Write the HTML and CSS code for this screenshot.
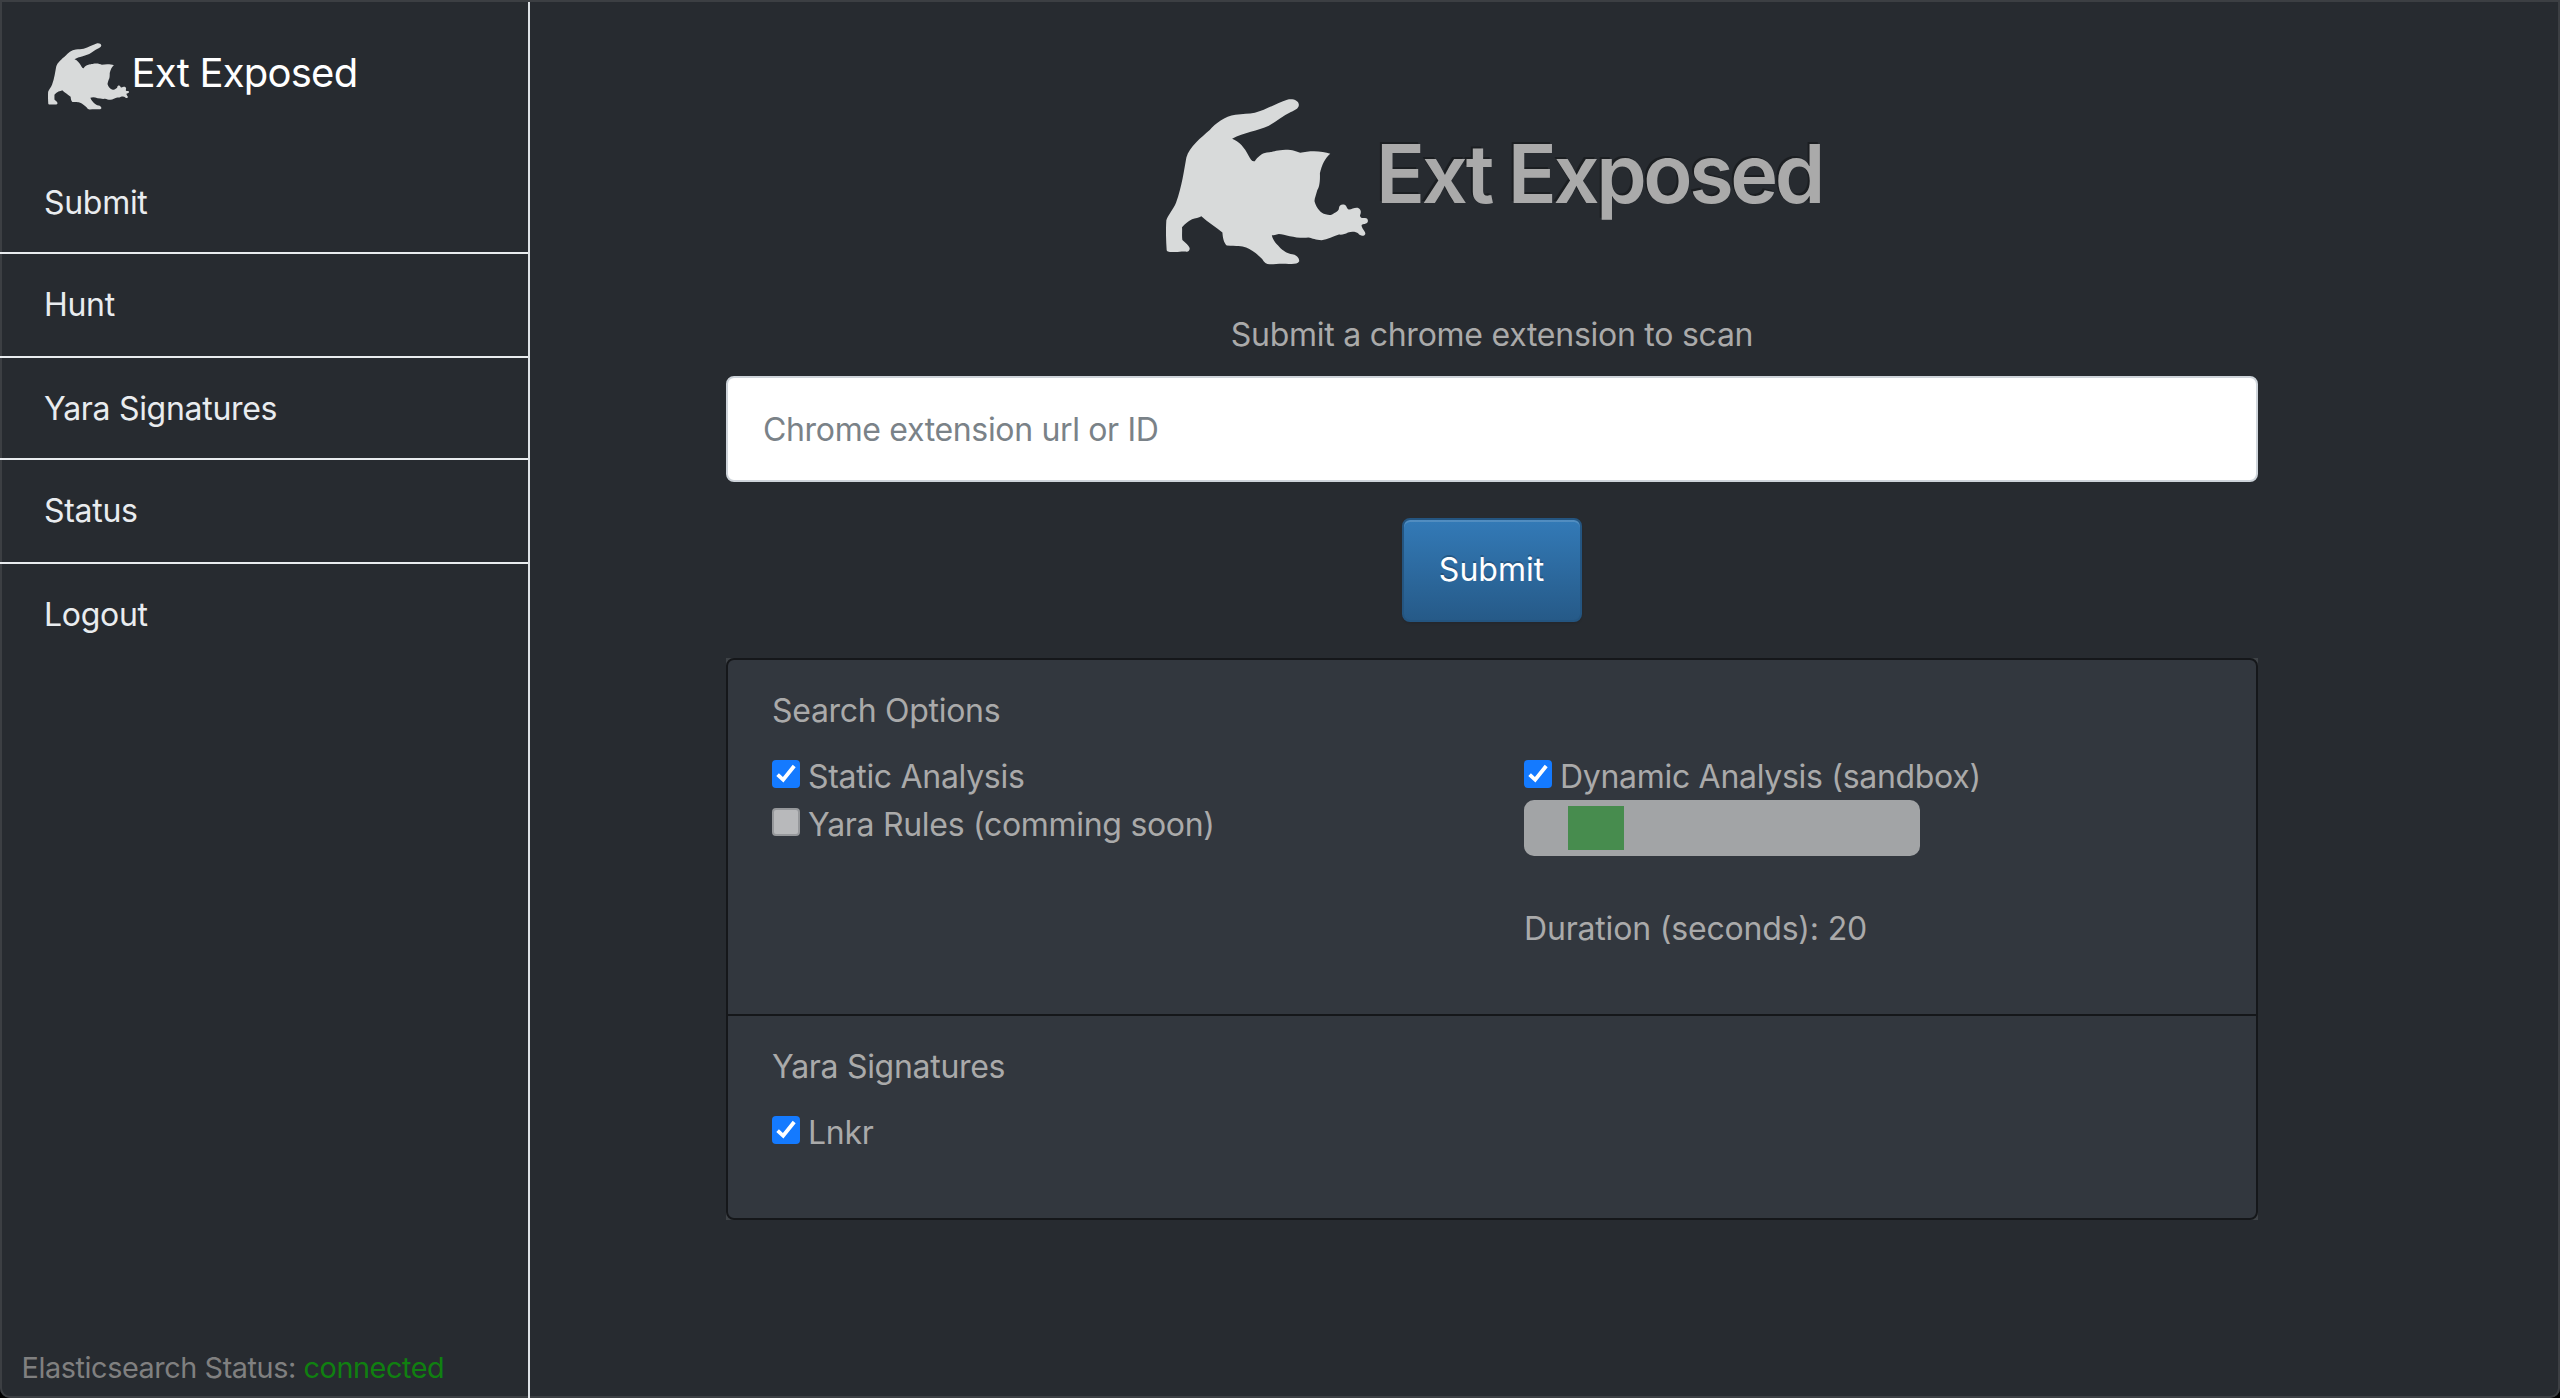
FILE: index.html
```html
<!DOCTYPE html>
<html lang="en">
<head>
  <meta charset="utf-8">
  <title>Ext Exposed</title>
  <link rel="stylesheet" href="styles.css">
</head>
<body>
  <svg class="defs" aria-hidden="true">
    <symbol id="cat" viewBox="82 57 605 497">
      <path d="M84 509C82 480 81 450 83 420C88 405 104 388 112 368C130 318 136 270 143 232C152 200 188 172 213 150C230 130 258 108 290 104C312 101 330 102 348 98C385 88 415 68 445 59C462 55 479 61 480 74C480 86 466 91 456 96C432 107 410 126 390 137C357 152 315 157 280 176C302 184 318 204 329 226C335 238 341 246 348 243C356 232 368 219 384 217C402 217 410 210 440 209C462 209 472 214 484 218C510 211 550 211 574 221C558 234 549 255 543 279C544 310 540 322 535 330C531 346 526 356 527 364C532 382 545 400 560 402C572 406 579 405 585 399C594 395 600 390 600 384C600 376 608 371 617 374C624 377 623 386 629 388C638 389 648 380 659 384C668 389 666 399 663 406C664 414 670 414 678 413C686 413 688 420 686 425C683 432 673 430 668 434C666 443 680 453 679 461C676 469 663 468 658 460C652 455 640 453 627 457C618 462 610 464 600 463C583 468 566 478 548 480C530 480 522 474 508 472C475 476 440 463 420 461C411 463 405 465 399 465C402 482 415 492 425 504C440 516 446 520 460 522C472 523 482 534 481 543C476 552 466 551 450 551C430 549 410 551 395 552C384 553 376 547 370 536C356 522 338 508 322 502C308 496 296 499 264 496C255 488 252 473 251 457C232 440 206 426 188 408C180 413 170 413 160 417C147 424 138 432 130 441C131 455 129 465 131 479C140 488 150 493 153 504C153 512 148 516 141 514C128 513 118 516 104 515C94 515 85 515 84 509Z"/>
    </symbol>
    <symbol id="tick" viewBox="0 0 28 28">
      <path d="M5.6 14.6 11.2 19.8 22.2 6" fill="none" stroke="#fff" stroke-width="3.8"/>
    </symbol>
  </svg>

  <div class="app">
    <aside class="sidebar">
      <a class="brand"><svg class="brand-cat"><use href="#cat"/></svg><span>Ext Exposed</span></a>
      <nav class="menu">
        <a class="menu-item short">Submit</a>
        <a class="menu-item">Hunt</a>
        <a class="menu-item short">Yara Signatures</a>
        <a class="menu-item">Status</a>
        <a class="menu-item last">Logout</a>
      </nav>
      <div class="es-status">Elasticsearch Status: <span class="ok">connected</span></div>
    </aside>

    <main class="content">
      <header class="hero">
        <svg class="hero-cat"><use href="#cat"/></svg>
        <h1>Ext Exposed</h1>
      </header>
      <p class="lead">Submit a chrome extension to scan</p>
      <input class="url" type="text" placeholder="Chrome extension url or ID">
      <button class="submit">Submit</button>

      <div class="card-wrap">
        <div class="card">
          <section class="options">
            <p class="title">Search Options</p>
            <div class="columns">
              <div>
                <label class="check"><svg class="box on"><use href="#tick"/></svg>Static Analysis</label>
                <label class="check"><span class="box off"></span>Yara Rules (comming soon)</label>
              </div>
              <div>
                <label class="check"><svg class="box on"><use href="#tick"/></svg>Dynamic Analysis (sandbox)</label>
                <div class="slider"><div class="thumb"></div></div>
                <p class="duration">Duration (seconds): 20</p>
              </div>
            </div>
          </section>
          <section class="signatures">
            <p class="title">Yara Signatures</p>
            <label class="check"><svg class="box on"><use href="#tick"/></svg>Lnkr</label>
          </section>
        </div>
      </div>
    </main>
  </div>
</body>
</html>
```
FILE: styles.css
```css
* {
  box-sizing: border-box;
}

body {
  margin: 0;
  background: #000;
  color: #aaa;
  font: 400 32px/48px Inter, "Liberation Sans", sans-serif;
  letter-spacing: -0.3px;
}

p,
h1 {
  margin: 0;
}

.defs {
  display: none;
}

.app {
  display: flex;
  height: 1398px;
  padding-top: 2px;
  background: #272b30;
  border-radius: 0 0 10px 10px;
  box-shadow: inset 0 0 0 2px #3c3f43;
  overflow: hidden;
}

/* Sidebar */
.sidebar {
  display: flex;
  flex-direction: column;
  width: 530px;
  border-right: 2px solid #dee2e6;
}

.brand {
  display: flex;
  height: 150px;
  padding: 41px 0 0 47.5px;
  color: #fff;
  font-size: 40px;
  line-height: 60px;
  letter-spacing: -0.76px;
}

.brand span {
  margin: 0 0 0 3px;
}

.brand-cat {
  width: 81px;
  height: 67px;
  fill: #d8dada;
}

.menu {
  display: flex;
  flex-direction: column;
}

.menu-item {
  height: 104px;
  padding: 27px 0 0 44px;
  border-bottom: 2px solid #e9ecef;
  color: #e9ecef;
}

.menu-item.short {
  height: 102px;
}

.menu-item.last {
  border-bottom: 0;
}

.es-status {
  margin-top: auto;
  padding: 0 0 9px 21.6px;
  color: #808080;
  font-size: 28.8px;
  line-height: 43px;
  letter-spacing: -0.42px;
}

.ok {
  color: #108010;
}

/* Main column */
.content {
  display: flex;
  flex-direction: column;
  align-items: center;
  width: 1532px;
  margin-left: 196px;
  padding-top: 97px;
}

.hero {
  display: flex;
  height: 166px;
  padding-left: 4px;
}

.hero-cat {
  width: 202px;
  height: 166px;
  margin-right: 8px;
  fill: #d8dada;
}

h1 {
  margin-top: 27px;
  font-size: 81px;
  font-weight: 600;
  line-height: 96px;
  letter-spacing: -3.4px;
  text-shadow: -2px -2px 0 rgba(0, 0, 0, .3);
}

.lead {
  margin-top: 46px;
  letter-spacing: -0.26px;
}

.url {
  width: 100%;
  height: 106px;
  margin-top: 17px;
  padding: 1px 35px 0;
  border: 2px solid #ced4da;
  border-radius: 8px;
  background: #fff;
  font: inherit;
  letter-spacing: -0.34px;
}

.url::placeholder {
  color: #7a8288;
  opacity: 1;
}

.submit {
  width: 180px;
  height: 104px;
  margin-top: 36px;
  padding: 0 1px 0 0;
  border: 2px solid #245580;
  border-radius: 8px;
  background: linear-gradient(#337ab7, #265a88);
  box-shadow: inset 0 2px 0 rgba(255, 255, 255, .15), 0 2px 2px rgba(0, 0, 0, .075);
  color: #fff;
  font: inherit;
  letter-spacing: 0;
  text-shadow: 0 -2px 0 rgba(0, 0, 0, .2);
}

/* Options card */
.card-wrap {
  width: 100%;
  margin-top: 36px;
  background: #3e4246;
}

.card {
  border: 2px solid #15171a;
  border-radius: 8px;
  background: #32373e;
}

.options,
.signatures {
  padding: 27px 44px 61px;
}

.options {
  border-bottom: 2px solid #15171a;
}

.columns {
  display: grid;
  grid-template-columns: 752px 1fr;
}

.title {
  margin-bottom: 18px;
}

.check {
  display: flex;
  gap: 8px;
}

.box {
  width: 28px;
  height: 28px;
  margin-top: 7px;
  border-radius: 4px;
}

.on {
  background: #147aff;
}

.off {
  border: 2px solid #96989b;
  background: #b8b9bb;
}

.slider {
  width: 396px;
  height: 56px;
  margin-top: -1px;
  padding: 6px 44px;
  border-radius: 10px;
  background: #a2a4a6;
}

.thumb {
  width: 56px;
  height: 44px;
  background: #478c4e;
}

.duration {
  margin-top: 49px;
  letter-spacing: -0.18px;
}
```
